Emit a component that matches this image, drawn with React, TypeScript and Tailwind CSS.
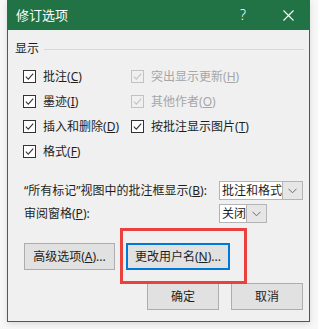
import React from "react";

const font = "font-['Noto_Sans','Noto_Sans_CJK_SC',sans-serif]";

function Box({ disabled = false }: { disabled?: boolean }) {
  const c = disabled ? "#c2c2c2" : "#333333";
  return (
    <svg width="13" height="13" viewBox="0 0 13 13" className="shrink-0">
      <rect x="0.5" y="0.5" width="12" height="12" fill={disabled ? "#f0f0f0" : "#ffffff"} stroke={c} />
      <path d="M2.8 6.6 L5.3 9.1 L10.2 3.6" fill="none" stroke={c} strokeWidth="1.1" />
    </svg>
  );
}

function Option({ label, k, disabled = false }: { label: string; k: string; disabled?: boolean }) {
  return (
    <div className="flex items-center h-[25px]">
      <Box disabled={disabled} />
      <span className={`ml-[7px] text-[12px] leading-none ${disabled ? "text-[#a6a6a6]" : "text-[#1e1e1e]"}`}>
        {label}(<span className="underline">{k}</span>)
      </span>
    </div>
  );
}

function Chevron() {
  return (
    <svg width="9" height="6" viewBox="0 0 9 6">
      <path d="M0.5 0.8 L4.5 4.8 L8.5 0.8" fill="none" stroke="#6a6a6a" strokeWidth="1" />
    </svg>
  );
}

function Select({ value, width }: { value: string; width: string }) {
  return (
    <div className="flex h-[19px]">
      <div className={`${width} h-full bg-white border border-[#b4b4b4] flex items-center pl-[2px] text-[12px] leading-none text-[#1e1e1e] whitespace-nowrap overflow-hidden`}>
        {value}
      </div>
      <div className="w-[20px] h-full bg-[#e6e6e6] border border-l-0 border-[#b4b4b4] flex items-center justify-center">
        <Chevron />
      </div>
    </div>
  );
}

function Button({ children, width, focused = false }: { children: React.ReactNode; width: string; focused?: boolean }) {
  return (
    <div
      className={`${width} h-[27px] flex items-center justify-center bg-[#e1e1e1] text-[12px] leading-none text-[#1e1e1e] ${
        focused ? "border-2 border-[#0078d7]" : "border border-[#adadad]"
      }`}
    >
      {children}
    </div>
  );
}

export default function App() {
  return (
    <div className={`relative w-[318px] h-[329px] bg-[#f7f7f7] ${font}`}>
      <div className="ml-[7px] w-[303px] h-[322px] flex flex-col bg-[#f0f0f0] border-x border-b border-[#217346] shadow-[0_2px_6px_rgba(0,0,0,0.12)]">
        {/* Title bar */}
        <div className="h-[30px] shrink-0 bg-[#217346] flex items-center pl-[8px] text-white">
          <span className="text-[13px] leading-none">修订选项</span>
          <span className="ml-auto text-[14px] leading-none font-light">?</span>
          <svg width="11" height="11" viewBox="0 0 11 11" className="ml-[37px] mr-[15px]">
            <path d="M0.5 0.5 L10.5 10.5 M10.5 0.5 L0.5 10.5" stroke="#ffffff" strokeWidth="1.1" />
          </svg>
        </div>

        {/* Body */}
        <div className="flex flex-col text-[#1e1e1e]">
          <div className="mt-[11px] h-[16px] flex items-center pl-[7px] pr-[5px]">
            <span className="text-[12px] leading-none">显示</span>
            <div className="ml-[5px] flex-1 h-px bg-[#d9d9d9]" />
          </div>

          <div className="mt-[7px] pl-[15px] grid grid-cols-[108px_1fr]">
            <Option label="批注" k="C" />
            <Option label="突出显示更新" k="H" disabled />
            <Option label="墨迹" k="I" />
            <Option label="其他作者" k="O" disabled />
            <Option label="插入和删除" k="D" />
            <Option label="按批注显示图片" k="T" />
            <Option label="格式" k="F" />
          </div>

          <div className="mt-[17px] pl-[16px] flex items-center h-[19px]">
            <span className="w-[195px] text-[12px] leading-none whitespace-nowrap">
              “所有标记”视图中的批注框显示(<span className="underline">B</span>):
            </span>
            <Select value="批注和格式" width="w-[64px]" />
          </div>

          <div className="mt-[4px] pl-[16px] flex items-center h-[19px]">
            <span className="w-[195px] text-[12px] leading-none">
              审阅窗格(<span className="underline">P</span>):
            </span>
            <Select value="关闭" width="w-[28px]" />
          </div>

          <div className="mt-[20px] pl-[16px] flex gap-[11px]">
            <Button width="w-[91px]">
              高级选项(<span className="underline">A</span>)...
            </Button>
            <Button width="w-[104px]" focused>
              更改用户名(<span className="underline">N</span>)...
            </Button>
          </div>

          <div className="mt-[13px] pr-[6px] flex justify-end gap-[12px]">
            <Button width="w-[72px]">确定</Button>
            <Button width="w-[72px]">取消</Button>
          </div>
        </div>
      </div>

      {/* red annotation frame */}
      <div className="absolute left-[120px] top-[228px] w-[127px] h-[56px] border-[3px] border-[#e8413e]" />
    </div>
  );
}
